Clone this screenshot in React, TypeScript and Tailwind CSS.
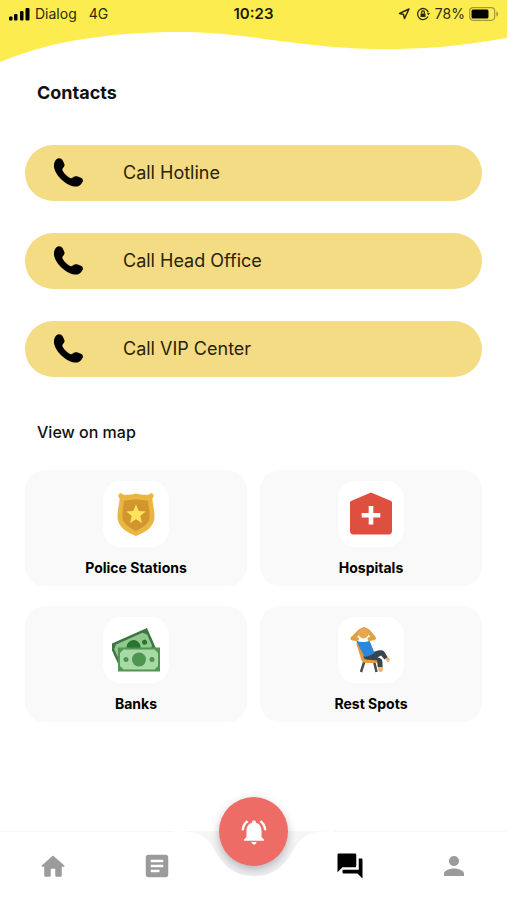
import React from 'react'
import { Navigation } from 'lucide-react'
import { MdArticle, MdForum, MdNotificationsActive, MdPerson } from 'react-icons/md'

const PhoneIcon = () => (
  <svg viewBox="0 0 30 30" className="size-[30px]" fill="currentColor" aria-hidden="true">
    <path d="M4.800.6c2.200-.8 4.200.2 5.200 2.400l1.300 2.800c.6 1.700 0 3-1.300 4.200-.9.900-.8 1.800-.2 3 1.700 3 4.400 5.600 7.400 7 1 .4 1.800.2 2.600-.6 1.300-1.200 3-1.500 4.900-.9l3.200 1.300c2 .9 2.500 2.600 1.400 4.600-1.600 2.900-4.300 4.400-7.800 4.200C13 27.600 2 17 1 9 .6 5 2 1.700 4.800.6z" />
  </svg>
)

const HomeIcon = () => (
  <svg viewBox="0 0 24 24" className="size-[30px]" fill="currentColor" aria-hidden="true">
    <path d="M10.200 19.500v-5.300h3.600v5.300c0 .55.45 1 1 1h3.200c.55 0 1-.45 1-1v-7h1.700c.46 0 .68-.57.33-.87L12.670 4.100c-.38-.34-.96-.34-1.340 0l-8.360 7.530c-.34.3-.13.87.33.87H5v7c0 .55.45 1 1 1h3.200c.55 0 1-.45 1-1z" />
  </svg>
)

const BadgeIcon = () => (
  <svg viewBox="0 0 48 48" className="size-12" aria-hidden="true">
    <path
      fill="#eab541"
      d="M9 3C7.500 3.500 6 4.500 6.300 6.200c.5 1.300 1.500 1.800 1.200 3.800C7 16 5.200 20.500 5.600 28.500 6.200 37 15 42.500 24 46c9-3.500 17.800-9 18.400-17.500.4-8-1.400-12.500-1.900-18.500-.3-2 .7-2.500 1.200-3.800C42 4.500 40.500 3.500 39 3c-1.600 1.800-4 2-6.300 1.700-2.200-.2-3.700 0-5.700-.5-2-1-4-1-6 0-2 .5-3.500.3-5.700.5C13 5 10.600 4.800 9 3z"
    />
    <path fill="#d1972e" d="M12 10.500c5 .2 8-1.300 12-1.300s7 1.500 12 1.300c.2 5 2 10 1.600 17C37 33.500 31 37.500 24 41c-7-3.500-13-7.500-13.600-13.500-.4-7 1.400-12 1.600-17z" />
    <path fill="#ffe25b" d="m24 14.500 2.700 6.500 7 .5-5.400 4.500 1.700 6.900L24 29.200l-6 3.700 1.700-6.900-5.400-4.500 7-.5z" />
  </svg>
)

const HospitalIcon = () => (
  <svg viewBox="0 0 48 48" className="size-12" aria-hidden="true">
    <path fill="#df4f40" d="M24 2.500 44 11c.7.3 1 .8 1 1.500V41c0 2-1.300 3.500-3.300 3.500H6.300C4.300 44.500 3 43 3 41V12.500c0-.7.3-1.200 1-1.500z" />
    <path fill="#fff" d="M21.700 16h4.600v7h7v4.600h-7v7h-4.600v-7h-7V23h7z" />
  </svg>
)

const MoneyIcon = () => (
  <svg viewBox="0 0 48 48" className="size-12" aria-hidden="true">
    <g transform="rotate(-24 22 22)">
      <rect x="1" y="9" width="41" height="24" fill="#3f7443" />
      <path fill="#8fc98e" d="M7 11.500h29l3.500 3.500v12L36 30.500H7L3.500 27V15z" />
      <circle cx="22" cy="21" r="7" fill="#2b7330" />
      <circle cx="34" cy="21" r="2.500" fill="#2b7330" />
    </g>
    <rect x="6" y="21.500" width="42" height="24" fill="#529650" />
    <path fill="#a7daa6" d="M11.500 23.500h31l3.500 3.500v13l-3.500 3.500h-31L8 40V27z" />
    <circle cx="27" cy="33.500" r="7" fill="#4e9650" />
    <circle cx="14" cy="33.500" r="2.500" fill="#4e9650" />
    <circle cx="40" cy="33.500" r="2.500" fill="#4e9650" />
  </svg>
)

const RestIcon = () => (
  <svg viewBox="0 0 48 48" className="size-12" aria-hidden="true">
    <path stroke="#4b4a50" strokeWidth="2.500" d="m17.500 35-3.500 11M27 35l2.500 11" />
    <path fill="none" stroke="#e99a3d" strokeWidth="4" strokeLinecap="round" strokeLinejoin="round" d="m11.500 18 4.500 14.500c.5 2 1.500 2.500 3 2.500h10" />
    <path fill="#f0b078" d="m31 39 4.500.5.5 2.500c0 2.500-1 4-2.500 4.200-1.500-.2-2.500-1.700-2.500-4.200zM39 29.500l3.500 3c1 1.500-.3 4-2 3.500l-3-4z" />
    <path fill="#37474f" d="M18 28.500 31 24.500c3-.7 5.500-.5 6.500 1.500l3 5-3 2.500-3.500-4-3.500 2c3.500.5 5 2 5 5V41h-4.800l-.7-6.500-11-1c-2.500-.5-3-2.500-2-5z" />
    <path fill="#2f87dc" d="M9 14.500c4 1.500 9 1 13.500 0l5 12.500c-3 2-6 3-10 4z" />
    <path fill="#fff" d="M10 12.500c4 1.500 8 1.500 12 0l.5 2.500c-4 1.200-8 1.200-12.500 0z" />
    <path fill="none" stroke="#dfa046" strokeWidth="4" strokeLinecap="round" strokeLinejoin="round" d="M10 13 5.500 12.500 13 5l4-2 4 2 6 7-4.500 1" />
    <circle cx="16.500" cy="7.500" r="5" fill="#e9a850" />
  </svg>
)

const contacts = ['Call Hotline', 'Call Head Office', 'Call VIP Center']

const places = [
  { title: 'Police Stations', icon: <BadgeIcon /> },
  { title: 'Hospitals', icon: <HospitalIcon /> },
  { title: 'Banks', icon: <MoneyIcon /> },
  { title: 'Rest Spots', icon: <RestIcon /> }
]

const StatusBar: React.FC = () => (
  <header className="relative h-[62px] text-[#2e2a0a]">
    <svg className="absolute inset-0 w-full h-full" viewBox="0 0 507 62" preserveAspectRatio="none" aria-hidden="true">
      <path fill="#fdec50" d="M0 0h507v38C455 47 420 49 385 49 300 49 250 32 180 32 110 32 50 41 0 62z" />
    </svg>
    <div className="relative grid grid-cols-[1fr_auto_1fr] items-center h-7 px-2 text-sm">
      <div className="flex items-center">
        <svg viewBox="0 0 22 14" className="w-[22px] h-[14px] mr-[5px]" fill="#000" aria-hidden="true">
          <rect x="1" y="9.500" width="3.500" height="4" rx="1" />
          <rect x="6" y="7" width="3.500" height="6.500" rx="1" />
          <rect x="12" y="4" width="3.500" height="9.500" rx="1" />
          <rect x="17.500" y="1" width="4" height="12.500" rx="1" />
        </svg>
        <span>Dialog</span>
        <span className="ml-3">4G</span>
      </div>
      <span className="text-[15px] font-semibold text-[#1c1a05]">10:23</span>
      <div className="flex items-center justify-end">
        <Navigation className="size-3 mr-[6px]" strokeWidth={3} />
        <svg viewBox="0 0 14 14" className="size-[14px] mr-[5px]" fill="none" stroke="currentColor" strokeWidth="1.300" aria-hidden="true">
          <path d="M12.300 5.300A5.500 5.500 0 1 0 12 9.500" />
          <path d="m10.800 6 1.800 2.200L14 6z" fill="currentColor" stroke="none" />
          <rect x="4.500" y="6.400" width="5" height="3.600" rx=".5" fill="currentColor" stroke="none" />
          <path d="M5.600 6.500V5.300a1.400 1.400 0 0 1 2.800 0v1.200" />
        </svg>
        <span className="mr-1">78%</span>
        <svg viewBox="0 0 30 14" className="w-[30px] h-[14px]" aria-hidden="true">
          <rect x=".7" y=".7" width="25" height="12.600" rx="3.500" fill="none" stroke="#a39a3c" strokeWidth="1.200" />
          <rect x="2.500" y="2.500" width="17" height="9" rx="1.500" fill="#000" />
          <path d="M27.300 4.500c2.500 1 2.500 4 0 5z" fill="#a39a3c" />
        </svg>
      </div>
    </div>
  </header>
)

const BottomNav: React.FC = () => (
  <nav className="relative h-[69px] mt-auto">
    {/* Bar edge with the notch under the alert button */}
    <div className="absolute inset-0 flex" aria-hidden="true">
      <div className="flex-1 border-t border-[#f6f6f6]"></div>
      <svg viewBox="0 0 160 69" className="w-40 h-[69px]">
        <defs>
          <linearGradient id="notch" x1="0" y1="0" x2="0" y2="1">
            <stop offset="0" stopColor="#f6f6f7" />
            <stop offset="1" stopColor="#ececf0" />
          </linearGradient>
        </defs>
        <path fill="url(#notch)" d="M0 0h160c-22 0-30 3-38 15-9 14-17 30-42 30S47 29 38 15C30 3 22 0 0 0z" />
      </svg>
      <div className="flex-1 border-t border-[#f6f6f6]"></div>
    </div>
    <div className="relative flex justify-between px-[38px] text-[#9b9b9b]">
      <div className="flex gap-[74px] pt-5">
        <button type="button" aria-label="Home"><HomeIcon /></button>
        <button type="button" aria-label="News"><MdArticle className="size-[30px]" /></button>
      </div>
      <button
        type="button"
        aria-label="Alert"
        className="flex items-center justify-center size-[69px] -mt-[34px] rounded-full bg-[#ed6c65] text-white shadow-[0_3px_8px_rgba(0,0,0,0.25)]"
      >
        <MdNotificationsActive className="size-[30px]" />
      </button>
      <div className="flex gap-[74px] pt-5">
        <button type="button" aria-label="Contacts" className="text-black"><MdForum className="size-[30px]" /></button>
        <button type="button" aria-label="Profile"><MdPerson className="size-[30px]" /></button>
      </div>
    </div>
  </nav>
)

const App: React.FC = () => {
  return (
    <div className="flex flex-col min-h-screen bg-white font-['Inter',sans-serif] text-[#111]">
      <StatusBar />

      <main className="px-[25px] pt-[19px] pb-10">
        <h1 className="px-3 text-lg leading-6 font-bold">Contacts</h1>

        <div className="flex flex-col gap-8 mt-10">
          {contacts.map((label) => (
            <button
              key={label}
              type="button"
              className="flex items-center gap-10 h-14 pl-7 rounded-full bg-[#f3dc83] text-lg text-[#2b220a]"
            >
              <span className="text-black"><PhoneIcon /></span>
              {label}
            </button>
          ))}
        </div>

        <h2 className="mt-[43px] px-3 text-base leading-6 font-medium">View on map</h2>

        <div className="grid grid-cols-2 gap-x-[13px] gap-y-5 mt-[26px]">
          {places.map((place) => (
            <button
              key={place.title}
              type="button"
              className="flex flex-col items-center h-[116px] pt-[11px] rounded-[20px] bg-[#f9f9f9]"
            >
              <span className="flex items-center justify-center size-[66px] rounded-[18px] bg-white">
                {place.icon}
              </span>
              <span className="mt-[11px] text-sm font-bold text-black">{place.title}</span>
            </button>
          ))}
        </div>
      </main>

      <BottomNav />
    </div>
  )
}

export default App
